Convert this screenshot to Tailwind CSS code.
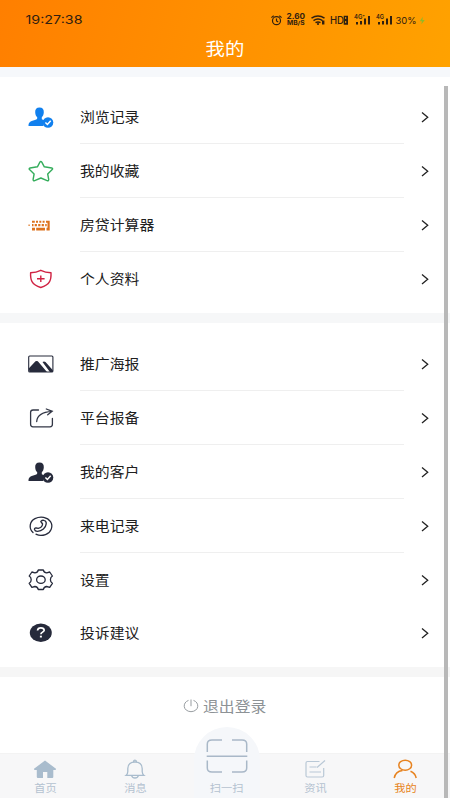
<!DOCTYPE html>
<html lang="zh-CN">
<head>
<meta charset="utf-8">
<title>我的</title>
<script src="https://cdn.jsdelivr.net/npm/@tailwindcss/browser@4"></script>
</head>
<body class="w-[450px] h-[800px] overflow-hidden bg-white font-['Liberation_Sans','Noto_Sans_CJK_SC',sans-serif]">
<div class="relative w-[450px] h-[800px] flex flex-col">
  <header class="h-[67px] shrink-0 bg-[linear-gradient(105deg,#ff7f00,#ffa200)] flex flex-col">
    <div class="h-[36px] shrink-0">
      <svg class="block" width="450" height="36" fill="#302010" font-family="Inter, sans-serif">
        <text x="25.5" y="24.3" font-size="12" textLength="57" lengthAdjust="spacingAndGlyphs">19:27:38</text>
        <g fill="none" stroke="#302010" stroke-width="1.2"><circle cx="276.5" cy="20.7" r="4"/><path d="M276.5 18.5v2.5l1.7 1M271.4 17.6l2.3-1.9M281.6 17.6l-2.3-1.9"/></g>
        <text x="286.5" y="19.3" font-size="7.5" font-weight="700" textLength="18.5" lengthAdjust="spacingAndGlyphs">2.60</text>
        <text x="287" y="25.3" font-size="5.5" font-weight="700" textLength="17.5" lengthAdjust="spacingAndGlyphs">MB/S</text>
        <g fill="none" stroke="#302010" stroke-width="1.5"><path d="M311.5 18.2q6.5-4.2 13 0M313.5 20.6q4.5-3 9 0M315.5 22.7q2.5-1.6 5 0"/></g>
        <circle cx="318" cy="24" r="1.1"/><rect x="322" y="20.5" width="2.4" height="4"/>
        <text x="330" y="24" font-size="10" font-weight="500" textLength="14" lengthAdjust="spacingAndGlyphs">HD</text>
        <path fill-rule="evenodd" d="M343.7 15.7h4.3v9h-4.3zM345.2 17v2h1v-2zM345.2 21v2h1v-2z"/>
        <text x="354" y="19.4" font-size="5.5" font-weight="600" textLength="11" lengthAdjust="spacingAndGlyphs">4G⁺</text>
        <path d="M356 22h2v2.4h-2zM360 21h2v3.4h-2zM364 18.5h2v5.9h-2zM368 16h2v8.4h-2z"/>
        <text x="376" y="19.4" font-size="5.5" font-weight="600" textLength="8" lengthAdjust="spacingAndGlyphs">4G</text>
        <path d="M378 22h2v2.4h-2zM382 21h2v3.4h-2zM386 18.5h2v5.9h-2zM390 16h2v8.4h-2z"/>
        <text x="395.5" y="23.7" font-size="9.3" textLength="21" lengthAdjust="spacingAndGlyphs">30%</text>
        <path fill="#90b928" d="M422.8 16.8l-3 4.4h2.2l-.8 3.2 3.6-4.5h-2.4z"/>
      </svg>
    </div>
    <h1 class="h-[24px] pt-[2px] flex justify-center items-center text-white text-[17px] leading-none"><span class="scale-x-[1.14]">我的</span></h1>
  </header>
  <div class="h-[10px] shrink-0 bg-[#f6f8fb]"></div>

  <section class="h-[236px] shrink-0 pt-[13px] text-[#202020]">
    <div class="h-[54px] flex">
      <div class="w-[80px] pl-[27px] flex items-center"><svg width="28" height="24" viewBox="0 0 28 24" fill="#1180ee"><path d="M12.5 2.5c3 0 4.5 2 4.3 4.8-.1 2.3-.8 4-2 5v2c1.500.8 3 1.100 4 2-2.300 1-2.700 2.500-2.300 4.700H1.500c0-3.500 1.500-4.300 4-5.200 2-.7 4.700-1 4.700-2.300V12.300c-1.300-1-1.900-2.700-2-5C8 4.500 9.500 2.500 12.500 2.500z"/><circle cx="21" cy="17.500" r="5.300"/><path d="M18.400 17.500l2 2 3.300-3.700" fill="none" stroke="#fff" stroke-width="1.500"/></svg></div>
      <div class="w-[324px] pt-[2px] border-b border-[#efefef] flex items-center text-[13.5px] leading-none"><span class="origin-left scale-x-[1.1]">浏览记录</span></div>
      <div class="pl-[17px] flex items-center"><svg width="9" height="12" viewBox="0 0 9 12" fill="none" stroke="#222" stroke-width="1.3"><path d="M1 1.500l5.700 4.700L1 10.900"/></svg></div>
    </div>
    <div class="h-[54px] flex">
      <div class="w-[80px] pl-[27px] flex items-center"><svg width="28" height="24" viewBox="0 0 28 24" fill="none" stroke="#35ad5c" stroke-width="1.400" stroke-linejoin="round"><path d="M12.900 3.200q.9-1.500 1.900 0l2.500 4.600 7.400 1.200q1.600.5.500 1.600l-4.500 4.400 1 5.500q0 1.700-1.600 1.100L13.900 19l-6.200 2.600q-1.600.6-1.600-1.100l1-5.500L2.500 10.600q-1-1.100.6-1.600l7.300-1.200z"/></svg></div>
      <div class="w-[324px] pt-[2px] border-b border-[#efefef] flex items-center text-[13.5px] leading-none"><span class="origin-left scale-x-[1.1]">我的收藏</span></div>
      <div class="pl-[17px] flex items-center"><svg width="9" height="12" viewBox="0 0 9 12" fill="none" stroke="#222" stroke-width="1.3"><path d="M1 1.500l5.700 4.700L1 10.900"/></svg></div>
    </div>
    <div class="h-[54px] flex">
      <div class="w-[80px] pl-[27px] flex items-center"><svg width="28" height="24" viewBox="0 0 28 24" fill="#dd721d"><path d="M1.500 11.500h1.200v1.500H1.500zM5 7.700h2.800v2H5zM9 7.700h2v2H9zM12.300 7.700h2v2h-2zM15.600 7.700h2v2h-2zM19 7.700h3.700v2H19zM5 11h1.500v2.300H5zM7.700 11h2.200v2.300H7.700zM11.200 11h2.200v2.300h-2.200zM14.700 11h2.200v2.300h-2.200zM18.200 11h1.500v2.300h-1.500zM20.500 9h2.200v8.500h-3.200v-2.800h1zM5 14.700h3v2.800H5zM9.200 14.700h8.800v2.800H9.200z"/></svg></div>
      <div class="w-[324px] pt-[2px] border-b border-[#efefef] flex items-center text-[13.5px] leading-none"><span class="origin-left scale-x-[1.1]">房贷计算器</span></div>
      <div class="pl-[17px] flex items-center"><svg width="9" height="12" viewBox="0 0 9 12" fill="none" stroke="#222" stroke-width="1.3"><path d="M1 1.500l5.700 4.700L1 10.900"/></svg></div>
    </div>
    <div class="h-[54px] flex">
      <div class="w-[80px] pl-[27px] flex items-center"><svg width="28" height="24" viewBox="0 0 28 24" fill="none" stroke="#d02343" stroke-width="1.400" stroke-linejoin="round"><path d="M13.800 3.300q4.500 2.200 10.200 2.500c.3 7-.7 11.700-10.200 14.700C4.300 17.500 3.300 12.800 3.600 5.800q5.700-.3 10.200-2.500zM10 11.800h7.600M13.800 8.500v6.600"/></svg></div>
      <div class="w-[324px] pt-[2px] flex items-center text-[13.5px] leading-none"><span class="origin-left scale-x-[1.1]">个人资料</span></div>
      <div class="pl-[17px] flex items-center"><svg width="9" height="12" viewBox="0 0 9 12" fill="none" stroke="#222" stroke-width="1.3"><path d="M1 1.500l5.700 4.700L1 10.900"/></svg></div>
    </div>
  </section>
  <div class="h-[10px] shrink-0 bg-[#f6f7f8]"></div>

  <section class="h-[344px] shrink-0 pt-[14px] text-[#202020]">
    <div class="h-[54px] flex">
      <div class="w-[80px] pl-[27px] flex items-center"><svg width="28" height="24" viewBox="0 0 28 24"><rect x="1.700" y="4" width="24.200" height="16" rx="1" fill="none" stroke="#262a3b" stroke-width="1.100"/><path fill="#262a3b" d="M1.700 16.500L8.500 9.300q1.200-.8 2.300 0L20 20H2.500zM15.500 10q1.500-1 3 0l7.400 8.300V20h-3z"/></svg></div>
      <div class="w-[324px] pt-[2px] border-b border-[#efefef] flex items-center text-[13.5px] leading-none"><span class="origin-left scale-x-[1.1]">推广海报</span></div>
      <div class="pl-[17px] flex items-center"><svg width="9" height="12" viewBox="0 0 9 12" fill="none" stroke="#222" stroke-width="1.3"><path d="M1 1.500l5.700 4.700L1 10.900"/></svg></div>
    </div>
    <div class="h-[54px] flex">
      <div class="w-[80px] pl-[27px] flex items-center"><svg width="28" height="24" viewBox="0 0 28 24" fill="none" stroke="#333746" stroke-width="1.300" stroke-linecap="round"><path d="M11.500 4H6Q3.600 4 3.600 6.300v12q0 2.500 2.400 2.500h17q2.400 0 2.400-2.500V12.500M9.700 15.500C10 9.500 15 6 25 5.300M19.300 3l5.900 2.300-4.500 3.500"/></svg></div>
      <div class="w-[324px] pt-[2px] border-b border-[#efefef] flex items-center text-[13.5px] leading-none"><span class="origin-left scale-x-[1.1]">平台报备</span></div>
      <div class="pl-[17px] flex items-center"><svg width="9" height="12" viewBox="0 0 9 12" fill="none" stroke="#222" stroke-width="1.3"><path d="M1 1.500l5.700 4.700L1 10.900"/></svg></div>
    </div>
    <div class="h-[54px] flex">
      <div class="w-[80px] pl-[27px] flex items-center"><svg width="28" height="24" viewBox="0 0 28 24" fill="#262a3b"><path d="M12.500 2.500c3 0 4.500 2 4.300 4.800-.1 2.300-.8 4-2 5v2c1.500.8 3 1.100 4 2-2.300 1-2.700 2.500-2.300 4.700H1.500c0-3.500 1.500-4.300 4-5.200 2-.7 4.700-1 4.700-2.300V12.300c-1.300-1-1.900-2.700-2-5C8 4.500 9.500 2.500 12.500 2.500z"/><circle cx="21" cy="17.500" r="5.300"/><path d="M18.400 17.500l2 2 3.300-3.700" fill="none" stroke="#fff" stroke-width="1.500"/></svg></div>
      <div class="w-[324px] pt-[2px] border-b border-[#efefef] flex items-center text-[13.5px] leading-none"><span class="origin-left scale-x-[1.1]">我的客户</span></div>
      <div class="pl-[17px] flex items-center"><svg width="9" height="12" viewBox="0 0 9 12" fill="none" stroke="#222" stroke-width="1.3"><path d="M1 1.500l5.700 4.700L1 10.900"/></svg></div>
    </div>
    <div class="h-[54px] flex">
      <div class="w-[80px] pl-[27px] flex items-center"><svg width="28" height="24" viewBox="0 0 28 24" fill="none" stroke="#262a3b" stroke-width="1.300" stroke-linecap="round" stroke-linejoin="round"><path d="M6 18.500C1.500 14.500 2.500 7.500 8 4.700s12.500-1.500 15.500 3 .7 11-5 12.900-8 .3-9.500-.4"/><path d="M13.800 7.500q1.700-1.800 3.500-1 2.200.8 1.900 3.300c-.5 4-4 7.400-8.700 7.500q-2.500.1-3-1.800-.3-1.400 1.500-1.700l2.200.5c2.500-.5 4.200-2 4.400-4.300z"/></svg></div>
      <div class="w-[324px] pt-[2px] border-b border-[#efefef] flex items-center text-[13.5px] leading-none"><span class="origin-left scale-x-[1.1]">来电记录</span></div>
      <div class="pl-[17px] flex items-center"><svg width="9" height="12" viewBox="0 0 9 12" fill="none" stroke="#222" stroke-width="1.3"><path d="M1 1.500l5.700 4.700L1 10.900"/></svg></div>
    </div>
    <div class="h-[54px] flex">
      <div class="w-[80px] pl-[27px] flex items-center"><svg width="28" height="24" viewBox="0 0 28 24" fill="none" stroke="#262a3b" stroke-width="1.300" stroke-linejoin="round"><path d="M11.300 2h5q.7 2.700 3.400 2.800l3-.8 2.700 4q-2 1.300-2 3.700t2 3.600l-2.700 4-3-.8q-2.700.2-3.400 3h-5q-.7-2.800-3.400-3l-3 .8-2.700-4q2-1.200 2-3.600T2.200 8l2.700-4 3 .8Q10.600 4.700 11.300 2z"/><ellipse cx="13.900" cy="11.700" rx="4.300" ry="3.700"/></svg></div>
      <div class="w-[324px] pt-[2px] flex items-center text-[13.5px] leading-none"><span class="origin-left scale-x-[1.1]">设置</span></div>
      <div class="pl-[17px] flex items-center"><svg width="9" height="12" viewBox="0 0 9 12" fill="none" stroke="#222" stroke-width="1.3"><path d="M1 1.500l5.700 4.700L1 10.900"/></svg></div>
    </div>
    <div class="h-[52px] flex">
      <div class="w-[80px] pl-[27px] flex items-center"><svg width="28" height="24" viewBox="0 0 28 24"><ellipse cx="13.800" cy="11.800" rx="11" ry="9.200" fill="#262a3b"/><path d="M10.500 9.500q.3-2.600 3.400-2.600t3.300 2.300c0 1.900-3.300 2-3.300 4" fill="none" stroke="#fff" stroke-width="1.700"/><rect x="12.900" y="14.700" width="2" height="1.800" fill="#fff"/></svg></div>
      <div class="w-[324px] pt-[1px] flex items-center text-[13.5px] leading-none"><span class="origin-left scale-x-[1.1]">投诉建议</span></div>
      <div class="pl-[17px] flex items-center"><svg width="9" height="12" viewBox="0 0 9 12" fill="none" stroke="#222" stroke-width="1.3"><path d="M1 1.500l5.700 4.700L1 10.900"/></svg></div>
    </div>
  </section>
  <div class="h-[10px] shrink-0 bg-[#f6f6f6]"></div>

  <div class="h-[76px] shrink-0 pt-[20px]">
    <div class="h-[18px] pl-[183px] flex items-center gap-[4px] text-[#8d9296] text-[14.4px] leading-none">
      <svg width="16" height="14" viewBox="0 0 16 14" fill="none" stroke="#989da1" stroke-width="1"><path d="M5.500 1.400C-.8 3.500-.3 12.300 8 12.700c8.300-.4 8.800-9.200 2.500-11.300M8 .5v6.700"/></svg>
      <span class="pt-[2px] origin-left scale-x-[1.1]">退出登录</span>
    </div>
  </div>

  <nav class="relative h-[45px] shrink-0 bg-[#f7f7f8] border-t border-[#f3f3f3] grid grid-cols-5 text-[#b4c2d0] text-[10.4px] leading-none">
    <div class="absolute left-[194px] top-[-27px] w-[66px] h-[71px] rounded-t-[33px] bg-[#f5f7fa]"></div>
    <div class="flex flex-col items-center pt-[5px] gap-[5px]"><svg width="24" height="20" viewBox="0 0 24 20" fill="#a9bccd"><path d="M12 1.500L23 9.800q.3 1.200-1 1.200h-1.700v7q0 1-1 1h-5v-6H10v6H4.800q-1 0-1-1v-7H2q-1.300 0-1-1.200z"/></svg><span class="scale-x-[1.08]">首页</span></div>
    <div class="flex flex-col items-center pt-[5px] gap-[5px]"><svg width="24" height="20" viewBox="0 0 24 20" fill="none" stroke="#a9bccd" stroke-width="1.300"><path d="M3 16.400h18q-1.800-1.500-1.800-4V9.500C19.200 5 16 3 12 3S4.800 5 4.800 9.500v2.900q0 2.500-1.800 4zM10.500 3q0-1.900 1.500-1.900T13.500 3M8.500 16.400Q9.500 19 12 19t3.500-2.600"/></svg><span class="scale-x-[1.08]">消息</span></div>
    <div class="relative left-[2px] flex flex-col items-center"><svg class="-mt-[16px] shrink-0" width="42" height="36" viewBox="0 0 42 36" fill="none" stroke="#a9b8c8" stroke-width="1.500"><path d="M16 2H6Q1.300 2 1.300 6v8M26 2h10q4.700 0 4.700 4v8M1.300 22.500V30q0 4 4.700 4h10M40.700 22.500V30q0 4-4.700 4H26M.7 18.200h40.600"/></svg><span class="mt-[10px] scale-x-[1.08]">扫一扫</span></div>
    <div class="flex flex-col items-center pt-[5px] gap-[5px]"><svg width="24" height="20" viewBox="0 0 24 20" fill="none" stroke="#b9c8d6" stroke-width="1.200"><path d="M16.500 2.500H4.500Q3 2.500 3 4v12.500Q3 18 4.500 18h14.700q1.500 0 1.500-1.500V9M6.500 8h7M6.500 13h11.500M14 8.500L22 1.500"/></svg><span class="scale-x-[1.08]">资讯</span></div>
    <div class="flex flex-col items-center pt-[5px] gap-[5px] text-[#e78320]"><svg width="24" height="20" viewBox="0 0 24 20" fill="none" stroke="#e78320" stroke-width="1.500"><ellipse cx="12.200" cy="6.200" rx="6.400" ry="5"/><path d="M1.200 19c.7-4 3.500-7 8.300-7.600M17.500 12.300c3 1.200 5 3.300 5.700 6.700"/></svg><span class="scale-x-[1.08]">我的</span></div>
  </nav>
  <div class="absolute left-[444px] top-[86px] w-[4px] h-[712px] bg-[#b8b8b8]"></div>
</div>
</body>
</html>
